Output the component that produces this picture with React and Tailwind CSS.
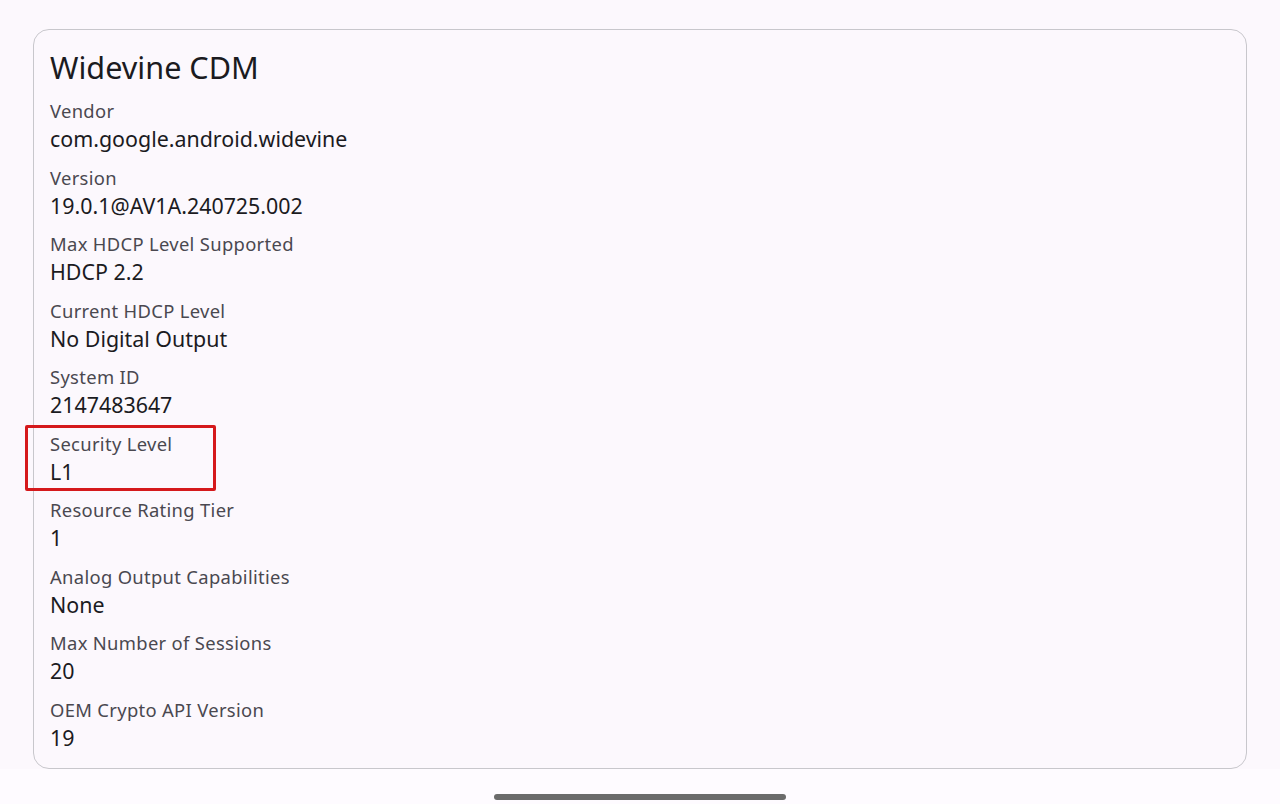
export default function App() {
  const rows = [
    ["Vendor", "com.google.android.widevine"],
    ["Version", "19.0.1@AV1A.240725.002"],
    ["Max HDCP Level Supported", "HDCP 2.2"],
    ["Current HDCP Level", "No Digital Output"],
    ["System ID", "2147483647"],
    ["Security Level", "L1"],
    ["Resource Rating Tier", "1"],
    ["Analog Output Capabilities", "None"],
    ["Max Number of Sessions", "20"],
    ["OEM Crypto API Version", "19"],
  ];
  return (
    <div
      className="w-[1280px] h-[804px] bg-[#fcf8fd] flex flex-col overflow-hidden"
      style={{ fontFamily: '"Noto Sans", "Open Sans", sans-serif' }}
    >
      <div className="mx-[33px] mt-[29px] h-[740px] border border-[#c8c7cc] rounded-[16px] px-[16px] pt-[15px]">
        <div className="text-[30.6px] leading-[44px] text-[#1b1b1f] mb-[9px]">Widevine CDM</div>
        <div className="flex flex-col">
          {rows.map(([label, value]) => (
            <div key={label} className="relative h-[66.5px] pt-[1px]">
              {label === "Security Level" && (
                <div className="absolute left-[-25px] top-[-6px] w-[191px] h-[66px] border-[3px] border-[#d5191c] rounded-[2px]" />
              )}
              <div className="text-[18.4px] leading-[24px] text-[#4a4850] tracking-[0.32px]">{label}</div>
              <div className="text-[21.4px] leading-[30px] pt-[1px] text-[#1b1b1f]">{value}</div>
            </div>
          ))}
        </div>
      </div>
      <div className="flex-1 bg-[#fefbff] flex items-end justify-center pb-[4px]">
        <div className="w-[292px] h-[6px] rounded-full bg-[#6b6b6b]" />
      </div>
    </div>
  );
}
